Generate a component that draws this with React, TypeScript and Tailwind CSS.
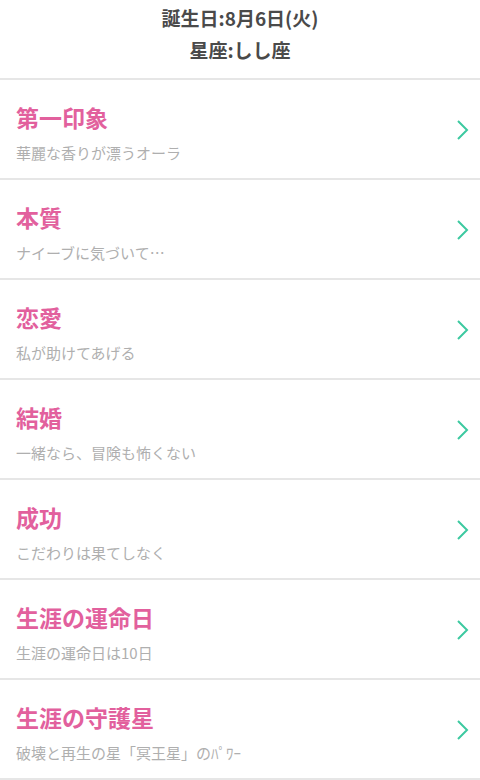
import React from "react";

const items = [
  { t: "第一印象", s: "華麗な香りが漂うオーラ" },
  { t: "本質", s: "ナイーブに気づいて…" },
  { t: "恋愛", s: "私が助けてあげる" },
  { t: "結婚", s: "一緒なら、冒険も怖くない" },
  { t: "成功", s: "こだわりは果てしなく" },
  { t: "生涯の運命日", s: "生涯の運命日は10日" },
  { t: "生涯の守護星", s: "破壊と再生の星「冥王星」のﾊﾟﾜｰ" },
];

export default function App() {
  return (
    <div
      className="w-[480px] h-[780px] bg-white overflow-hidden"
      style={{ fontFamily: '"Noto Sans CJK JP", "Noto Sans", sans-serif' }}
    >
      <div className="h-[80px] border-b-2 border-[#e6e6e6] flex flex-col items-center pt-[4px]">
        <div className="text-[19px] leading-[28px] font-bold text-[#4a4a4a]">誕生日:8月6日(火)</div>
        <div className="text-[19px] leading-[28px] font-bold text-[#4a4a4a] mt-[4px]">星座:しし座</div>
      </div>
      {items.map((it) => (
        <div key={it.t} className="h-[100px] border-b-2 border-[#e6e6e6] flex items-center pl-[16px] pr-[10px]">
          <div className="flex-1 self-stretch flex flex-col pt-[22px]">
            <div className="text-[23px] leading-[30px] font-bold text-[#e2609d]">{it.t}</div>
            <div className="text-[15px] leading-[20px] text-[#afafaf] mt-[11px]">{it.s}</div>
          </div>
          <svg width="14" height="22" viewBox="0 0 14 22" className="mt-[2px]">
            <path d="M2 2 L11 11 L2 20" fill="none" stroke="#3cc9a0" strokeWidth="2" />
          </svg>
        </div>
      ))}
    </div>
  );
}
